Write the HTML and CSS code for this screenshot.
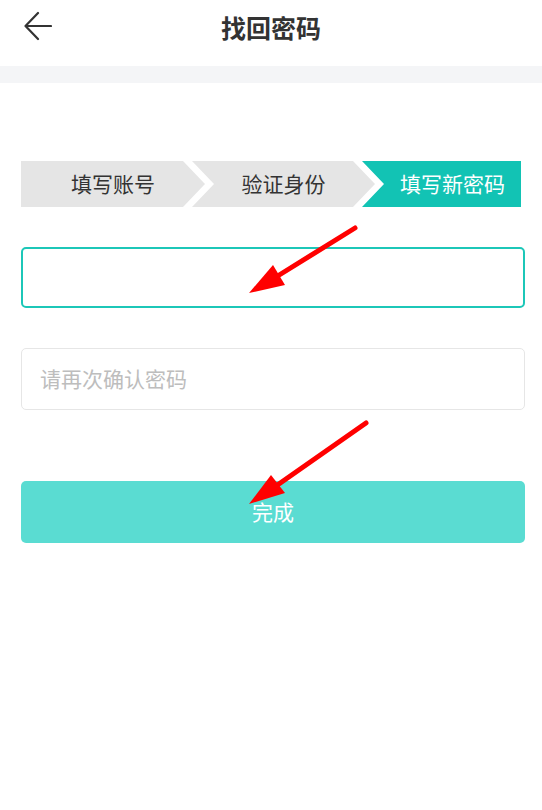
FILE: index.html
```html
<!DOCTYPE html>
<html lang="zh-CN">
<head>
    <meta charset="UTF-8" />
    <meta name="viewport" content="width=device-width, initial-scale=1.0" />
    <link rel="stylesheet" href="styles.css">
    <title>找回密码</title>
</head>
<body>
    <header class="topbar">
        <a class="back" href="#">
            <svg width="28" height="32" viewBox="0 0 28 32">
                <path d="M14 2 L1.5 15 L14 28 M1.5 15 H27" fill="none" stroke="#333" stroke-width="2.2" stroke-linecap="round" stroke-linejoin="round"/>
            </svg>
        </a>
        <h1>找回密码</h1>
    </header>
    <div class="divider"></div>

    <main class="content">
        <div class="steps">
            <div class="step step-first">填写账号</div>
            <div class="step step-mid">验证身份</div>
            <div class="step step-last active">填写新密码</div>
        </div>

        <input class="field focused" type="password" placeholder="">
        <input class="field" type="password" placeholder="请再次确认密码">

        <button class="submit">完成</button>
    </main>

    <svg class="marks" width="542" height="810" viewBox="0 0 542 810">
        <line x1="355" y1="228" x2="276" y2="277" stroke="#ff0000" stroke-width="5" stroke-linecap="round"/>
        <polygon points="249,293 273,265 285,285" fill="#ff0000"/>
        <line x1="366" y1="423" x2="276" y2="486" stroke="#ff0000" stroke-width="5" stroke-linecap="round"/>
        <polygon points="249,504 271,475 285,493" fill="#ff0000"/>
    </svg>
</body>
</html>
```

FILE: styles.css
```css
* {
    box-sizing: border-box;
}

body {
    margin: 0;
    background-color: #fff;
    font-family: "Noto Sans CJK SC", "Noto Sans", sans-serif;
    color: #333;
    position: relative;
    min-height: 810px;
}

.topbar {
    height: 66px;
    display: flex;
    align-items: center;
    justify-content: center;
    padding-bottom: 12px;
    position: relative;
}

.topbar h1 {
    margin: 0;
    font-size: 25px;
    font-weight: bold;
    color: #333;
}

.back {
    position: absolute;
    left: 24px;
    top: 11px;
    display: flex;
}

.divider {
    height: 17px;
    background-color: #f4f5f7;
}

.content {
    padding: 78px 17px 0 21px;
    display: flex;
    flex-direction: column;
}

.steps {
    display: flex;
    width: 500px;
    height: 46px;
    margin-bottom: 40px;
}

.step {
    display: flex;
    align-items: center;
    justify-content: center;
    height: 46px;
    padding-bottom: 3px;
    font-size: 21px;
    background-color: #e5e5e5;
    color: #333;
}

.step-first {
    width: 184px;
    clip-path: polygon(0 0, calc(100% - 22px) 0, 100% 50%, calc(100% - 22px) 100%, 0 100%);
}

.step-mid {
    width: 183px;
    margin-left: -13px;
    clip-path: polygon(0 0, calc(100% - 22px) 0, 100% 50%, calc(100% - 22px) 100%, 0 100%, 22px 50%);
}

.step-last {
    flex: 1;
    margin-left: -13px;
    padding-left: 22px;
    clip-path: polygon(0 0, 100% 0, 100% 100%, 0 100%, 22px 50%);
}

.step.active {
    background-color: #12c3b4;
    color: #fff;
}

.field {
    width: 100%;
    height: 62px;
    border: 1px solid #e6e6e6;
    border-radius: 5px;
    padding: 0 18px 2px;
    font-family: inherit;
    font-size: 21px;
    color: #333;
    outline: none;
    margin-bottom: 40px;
    background-color: #fff;
}

.field.focused {
    height: 61px;
    border: 2px solid #1cc7b8;
}

.field::placeholder {
    color: #bdbdbd;
}

.submit {
    margin-top: 31px;
    height: 62px;
    width: 100%;
    padding-bottom: 3px;
    border: none;
    border-radius: 5px;
    background-color: #5adcd2;
    color: #fff;
    font-family: inherit;
    font-size: 21px;
}

.marks {
    position: absolute;
    left: 0;
    top: 0;
    pointer-events: none;
}
```
